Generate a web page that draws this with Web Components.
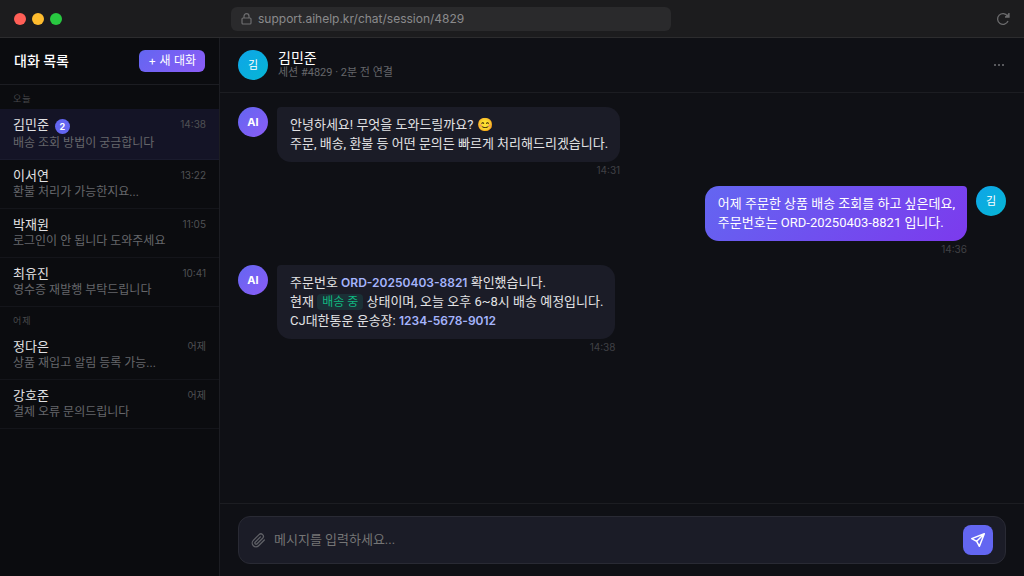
<!DOCTYPE html>
<html lang="ko">
<head>
<meta charset="utf-8">
<meta name="viewport" content="width=device-width, initial-scale=1">
<title>AI Help</title>
<style>
    html, body {
        height:100%;
        margin:0;
    }
    body {
        --line:#1c1d22;
        --indigo:#6366f1;
        --korean:Roboto, "Noto Sans CJK KR", sans-serif;
        --latin:Inter, "Noto Sans CJK KR", sans-serif;
        background:#0f1015;
        color:#e2e2e4;
        font-family:var(--korean);
        font-size:13px;
    }
</style>
</head>
<body>

<chat-app>
    <browser-bar slot="top" url="support.aihelp.kr/chat/session/4829"></browser-bar>

    <chat-sidebar slot="side">
        <chat-group label="오늘">
            <chat-item name="김민준" time="14:38" count="2" active>배송 조회 방법이 궁금합니다</chat-item>
            <chat-item name="이서연" time="13:22">환불 처리가 가능한지요...</chat-item>
            <chat-item name="박재원" time="11:05">로그인이 안 됩니다 도와주세요</chat-item>
            <chat-item name="최유진" time="10:41">영수증 재발행 부탁드립니다</chat-item>
        </chat-group>
        <chat-group label="어제">
            <chat-item name="정다은" time="어제">상품 재입고 알림 등록 가능...</chat-item>
            <chat-item name="강호준" time="어제">결제 오류 문의드립니다</chat-item>
        </chat-group>
    </chat-sidebar>

    <chat-header name="김민준">세션 #4829 · 2분 전 연결</chat-header>

    <message-list>
        <chat-message who="AI" time="14:31">안녕하세요! 무엇을 도와드릴까요? 😊<br>주문, 배송, 환불 등 어떤 문의든 빠르게 처리해드리겠습니다.</chat-message>
        <chat-message who="김" time="14:36" mine>어제 주문한 상품 배송 조회를 하고 싶은데요,<br>주문번호는 ORD-20250403-8821 입니다.</chat-message>
        <chat-message who="AI" time="14:38">주문번호 <b>ORD-20250403-8821</b> 확인했습니다.<br>현재 <status-tag>배송 중</status-tag> 상태이며, 오늘 오후 6~8시 배송 예정입니다.<br>CJ대한통운 운송장: <b>1234-5678-9012</b></chat-message>
    </message-list>

    <chat-composer></chat-composer>
</chat-app>

<script>
function makeTemplate(html) {
    const template = document.createElement('template');
    template.innerHTML = html;
    return template;
}

class BaseElement extends HTMLElement {
    constructor() {
        super();
        const shadow = this.attachShadow({mode: 'open'});
        shadow.append(this.constructor.template.content.cloneNode(true));
    }

    fill(selector, attribute) {
        this.shadowRoot.querySelector(selector).textContent = this.getAttribute(attribute) || '';
    }
}


class ChatApp extends BaseElement {
    static template = makeTemplate(`
<style>
    :host {
        display:flex;
        flex-direction:column;
        height:100vh;
    }
    .body {
        display:flex;
        flex:1;
        min-height:0;
    }
    main {
        display:flex;
        flex-direction:column;
        flex:1;
        min-width:0;
    }
</style>
<slot name="top"></slot>
<div class="body">
    <slot name="side"></slot>
    <main><slot></slot></main>
</div>
`);
}


class BrowserBar extends BaseElement {
    static template = makeTemplate(`
<style>
    :host {
        display:grid;
        grid-template-columns:1fr minmax(0, 440px) 1fr;
        align-items:center;
        box-sizing:border-box;
        padding:7px 14px 6px;
        background:#1c1c1e;
        border-bottom:1px solid #2c2c2e;
    }
    .dots {
        display:flex;
        gap:6px;
    }
    .dots i {
        width:12px;
        height:12px;
        border-radius:50%;
        background:#ff5f57;
    }
    .dots i:nth-child(2) { background:#febc2e; }
    .dots i:nth-child(3) { background:#28c840; }
    .address {
        display:flex;
        align-items:center;
        gap:6px;
        box-sizing:border-box;
        height:24px;
        /* keeps the address a little left of the window centre */
        margin:0 61px 0 -61px;
        padding:0 10px;
        border-radius:6px;
        background:#2a2a2c;
        color:#8a8a8c;
        font-family:var(--latin);
        font-size:12px;
        line-height:16px;
    }
    button {
        display:flex;
        justify-self:end;
        padding:0;
        border:0;
        background:none;
        color:#6b6b6d;
    }
</style>
<div class="dots"><i></i><i></i><i></i></div>
<div class="address">
    <svg width="11" height="12" viewBox="0 0 11 12" fill="none" stroke="#6e6e70" stroke-width="1.2"><rect x="1" y="5" width="9" height="6" rx="1"/><path d="M3 5V3.2a2.5 2.5 0 0 1 5 0V5"/></svg>
    <span></span>
</div>
<button type="button" aria-label="새로고침">
    <svg width="14" height="14" viewBox="0 0 14 14" fill="none" stroke="currentColor" stroke-width="1.3"><path d="M12 9a5.4 5.4 0 1 1-.5-5M13 1v4H9"/><path d="M13 1v4H9z" fill="currentColor" stroke="none"/></svg>
</button>
`);

    connectedCallback() {
        this.fill('span', 'url');
    }
}


class ChatSidebar extends BaseElement {
    static template = makeTemplate(`
<style>
    :host {
        display:block;
        flex:0 0 220px;
        box-sizing:border-box;
        background:#0b0c0f;
        border-right:1px solid var(--line);
    }
    header {
        display:flex;
        align-items:center;
        justify-content:space-between;
        padding:12px 14px;
        border-bottom:1px solid var(--line);
    }
    h2 {
        margin:0;
        color:#fff;
        font-size:14px;
        font-weight:500;
        line-height:22px;
    }
    button {
        height:22px;
        padding:0 9px;
        border:0;
        border-radius:6px;
        background:linear-gradient(135deg, #6366f1, #8b5cf6);
        color:#fff;
        font:400 12px/22px var(--latin);
    }
</style>
<header>
    <h2>대화 목록</h2>
    <button type="button">+ 새 대화</button>
</header>
<slot></slot>
`);
}


class ChatGroup extends BaseElement {
    static template = makeTemplate(`
<style>
    :host {
        display:block;
    }
    h3 {
        margin:0;
        padding:8px 13px 4px;
        color:#48494c;
        font-size:9px;
        font-weight:400;
        line-height:12px;
        letter-spacing:1px;
    }
</style>
<h3></h3>
<slot></slot>
`);

    connectedCallback() {
        this.fill('h3', 'label');
    }
}


class ChatItem extends BaseElement {
    static template = makeTemplate(`
<style>
    :host {
        display:block;
        border-bottom:1px solid #14151a;
    }
    :host([active]) {
        background:#141426;
        border-color:#1a1b2d;
    }
    .row {
        display:flex;
        justify-content:space-between;
        padding:8px 13px 0;
    }
    .name {
        display:flex;
        gap:6px;
        color:#e2e2e4;
        font-size:13px;
        line-height:16px;
    }
    .count {
        min-width:15px;
        height:15px;
        margin-top:2px;
        border-radius:8px;
        background:var(--indigo);
        color:#fff;
        font-family:var(--latin);
        font-size:9px;
        font-weight:700;
        line-height:15px;
        text-align:center;
    }
    .count:empty {
        display:none;
    }
    time {
        color:#505154;
        font-family:var(--latin);
        font-size:10px;
        line-height:14px;
    }
    p {
        margin:0;
        padding:0 13px 8px;
        overflow:hidden;
        color:#66676b;
        font-size:12px;
        line-height:16px;
        text-overflow:ellipsis;
        white-space:nowrap;
    }
    :host([active]) p {
        padding-top:1px;
    }
</style>
<div class="row">
    <span class="name"><span class="label"></span><span class="count"></span></span>
    <time></time>
</div>
<p><slot></slot></p>
`);

    connectedCallback() {
        this.fill('.label', 'name');
        this.fill('.count', 'count');
        this.fill('time', 'time');
    }
}


class ChatAvatar extends BaseElement {
    static template = makeTemplate(`
<style>
    :host {
        display:flex;
        align-items:center;
        justify-content:center;
        flex:none;
        width:30px;
        height:30px;
        border-radius:50%;
        background:linear-gradient(135deg, #0ea5e9, #06b6d4);
        color:#fff;
        font-family:var(--latin);
        font-size:11px;
        font-weight:400;
        line-height:16px;
    }
    :host([bot]) {
        background:linear-gradient(135deg, #6366f1, #8b5cf6);
        font-weight:700;
    }
</style>
<slot></slot>
`);
}


class ChatHeader extends BaseElement {
    static template = makeTemplate(`
<style>
    :host {
        display:flex;
        align-items:center;
        gap:10px;
        padding:12px 18px;
        border-bottom:1px solid var(--line);
    }
    .info {
        flex:1;
    }
    h1 {
        margin:0;
        color:#fff;
        font-size:14px;
        font-weight:400;
        line-height:16px;
    }
    p {
        margin:0;
        color:#66676b;
        font-size:11px;
        line-height:14px;
    }
    button {
        display:flex;
        padding:0;
        border:0;
        background:none;
        color:#58595d;
    }
</style>
<chat-avatar>김</chat-avatar>
<div class="info">
    <h1></h1>
    <p><slot></slot></p>
</div>
<button type="button" aria-label="더보기">
    <svg width="14" height="14" viewBox="0 0 14 14" fill="currentColor"><path d="M2 6h2v2H2zM6 6h2v2H6zM10 6h2v2h-2z"/></svg>
</button>
`);

    connectedCallback() {
        this.fill('h1', 'name');
    }
}


class MessageList extends BaseElement {
    static template = makeTemplate(`
<style>
    :host {
        display:flex;
        flex-direction:column;
        flex:1;
        gap:9px;
        min-height:0;
        padding:14px 18px;
        overflow:hidden;
    }
</style>
<slot></slot>
`);
}


class ChatMessage extends BaseElement {
    static template = makeTemplate(`
<style>
    :host {
        display:flex;
        align-items:flex-start;
        gap:9px;
    }
    :host([mine]) {
        flex-direction:row-reverse;
    }
    .bubble {
        padding:8px 12px 9px 13px;
        border-radius:4px 14px 14px 14px;
        background:#1b1c27;
        color:#e2e2e4;
        font-size:13px;
        line-height:19px;
    }
    :host([mine]) .bubble {
        border-radius:14px 4px 14px 14px;
        background:linear-gradient(135deg, #6366f1, #7c3aed);
        color:#fff;
    }
    time {
        display:block;
        padding-top:2px;
        color:#404145;
        font-family:var(--latin);
        font-size:10px;
        line-height:13px;
        text-align:right;
    }
    ::slotted(b) {
        color:#a5b4fc;
        font-family:var(--latin);
        font-size:12px;
        font-weight:600;
        line-height:16px;
    }
</style>
<chat-avatar></chat-avatar>
<div>
    <div class="bubble"><slot></slot></div>
    <time></time>
</div>
`);

    connectedCallback() {
        this.fill('chat-avatar', 'who');
        this.fill('time', 'time');
        this.shadowRoot.querySelector('chat-avatar').toggleAttribute('bot', !this.hasAttribute('mine'));
    }
}


class StatusTag extends BaseElement {
    static template = makeTemplate(`
<style>
    :host {
        display:inline-block;
        padding:0 5px;
        border-radius:4px;
        background:#1a3036;
        color:#10b981;
        font-size:12px;
        line-height:16px;
    }
</style>
<slot></slot>
`);
}


class ChatComposer extends BaseElement {
    static template = makeTemplate(`
<style>
    :host {
        display:block;
        padding:12px 18px;
        border-top:1px solid var(--line);
    }
    form {
        display:flex;
        align-items:center;
        gap:8px;
        padding:8px 12px;
        border:1px solid #292a34;
        border-radius:12px;
        background:#1b1c27;
    }
    button {
        display:flex;
        align-items:center;
        justify-content:center;
        padding:0;
        border:0;
        background:none;
        color:#606167;
    }
    .send {
        width:30px;
        height:30px;
        border-radius:8px;
        background:var(--indigo);
        color:#fff;
    }
    input {
        flex:1;
        min-width:0;
        padding:0;
        border:0;
        outline:0;
        background:none;
        color:#e2e2e4;
        font:13px/20px var(--korean);
    }
    input::placeholder {
        color:#757575;
    }
</style>
<form>
    <button type="button" aria-label="파일 첨부">
        <svg width="15" height="15" viewBox="0 0 24 24" fill="none" stroke="currentColor" stroke-width="2" stroke-linecap="round" stroke-linejoin="round"><path d="M21.4 11.1l-9.2 9.2a6 6 0 0 1-8.5-8.5l9.2-9.2a4 4 0 0 1 5.7 5.7l-9.2 9.2a2 2 0 0 1-2.8-2.8l8.5-8.5"/></svg>
    </button>
    <input type="text" aria-label="메시지" placeholder="메시지를 입력하세요...">
    <button class="send" type="button" aria-label="보내기">
        <svg width="16" height="16" viewBox="0 0 16 16" fill="none" stroke="currentColor" stroke-width="1.5" stroke-linejoin="round"><path d="M14.3 1.7L1.7 6.6l5 2.7 2.7 5zM14.3 1.7L6.7 9.3"/></svg>
    </button>
</form>
`);
}


customElements.define('chat-avatar', ChatAvatar);
customElements.define('status-tag', StatusTag);
customElements.define('browser-bar', BrowserBar);
customElements.define('chat-item', ChatItem);
customElements.define('chat-group', ChatGroup);
customElements.define('chat-sidebar', ChatSidebar);
customElements.define('chat-header', ChatHeader);
customElements.define('chat-message', ChatMessage);
customElements.define('message-list', MessageList);
customElements.define('chat-composer', ChatComposer);
customElements.define('chat-app', ChatApp);
</script>
</body>
</html>
